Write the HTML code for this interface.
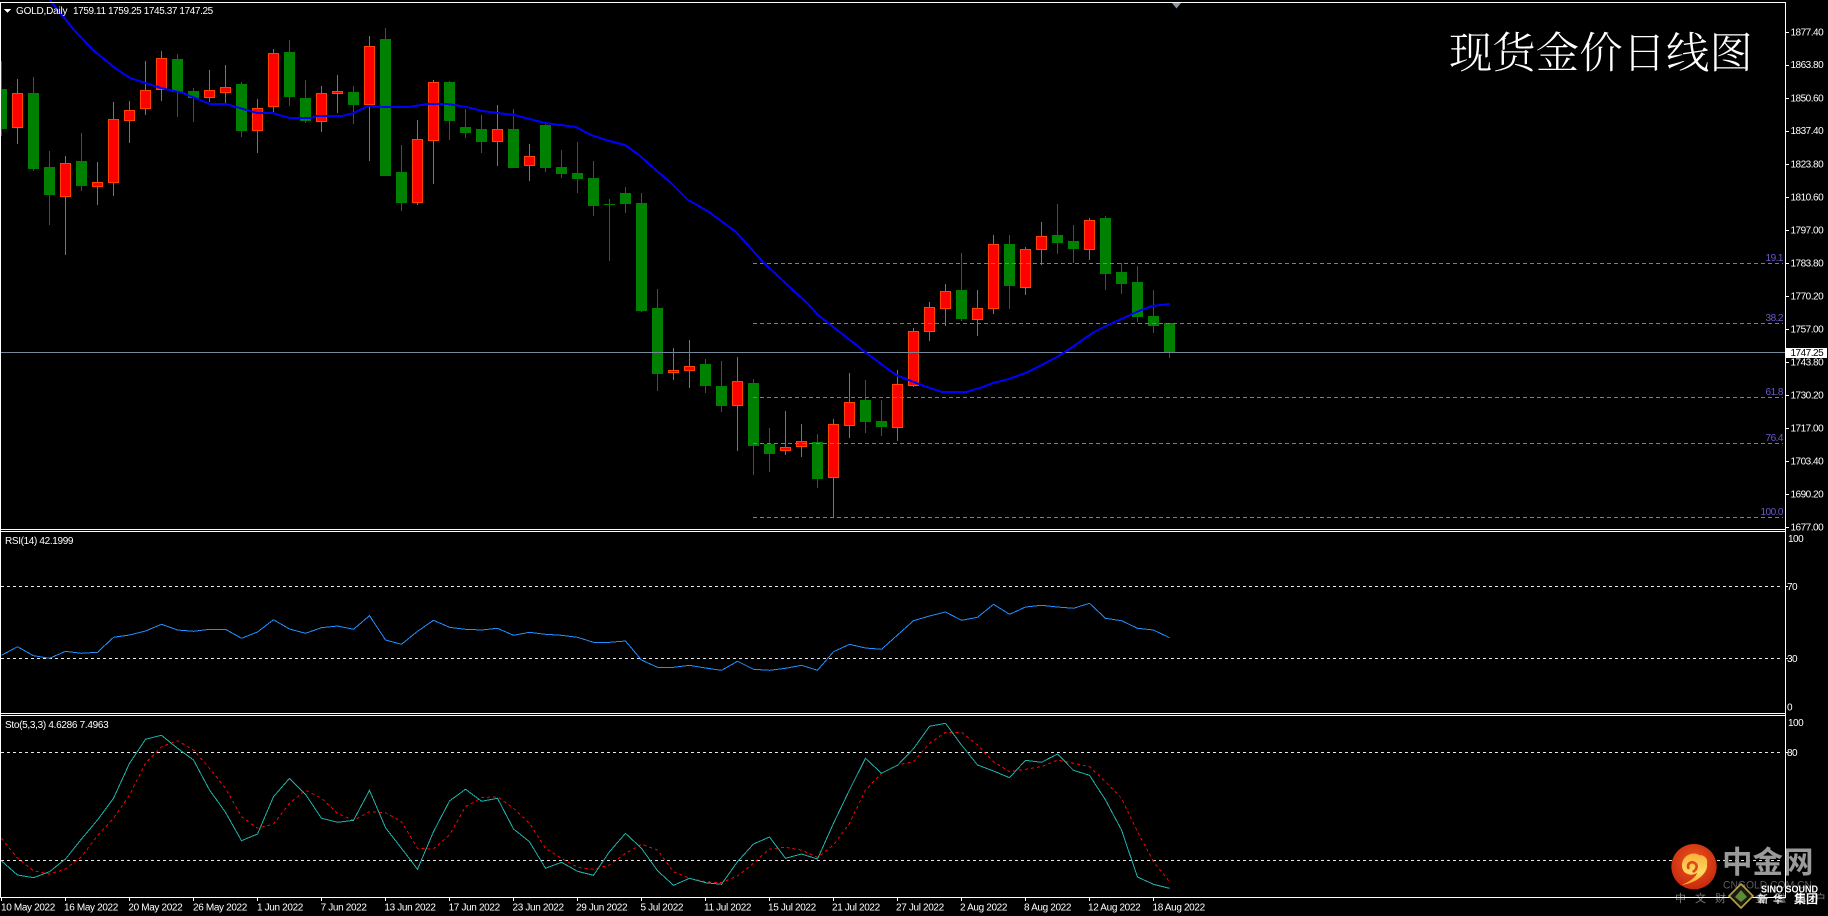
<!DOCTYPE html>
<html lang="zh">
<head>
<meta charset="utf-8">
<title>GOLD Daily</title>
<style>
html,body{margin:0;padding:0;background:#000;width:1828px;height:916px;overflow:hidden}
svg{display:block}
text{font-family:"Liberation Sans","Noto Sans CJK SC",sans-serif;font-size:10px;fill:#fff}
.a text,text.a{letter-spacing:-.5px}
.d text{letter-spacing:-.35px}
.f text{letter-spacing:-.5px;fill:#6a5acd;text-anchor:end}
</style>
</head>
<body>
<svg xmlns="http://www.w3.org/2000/svg" width="1828" height="916" viewBox="0 0 1828 916">
<defs>
<radialGradient id="lg" cx="50%" cy="40%" r="60%"><stop offset="0" stop-color="#ea5a1c"/><stop offset="1" stop-color="#c9280f"/></radialGradient>
<linearGradient id="ly" x1="0" y1="0" x2="0" y2="1"><stop offset="0" stop-color="#fbb03a"/><stop offset=".6" stop-color="#ffd860"/><stop offset="1" stop-color="#f5a623"/></linearGradient>
</defs>
<rect width="1828" height="916" fill="#000"/>

<g shape-rendering="crispEdges">
<!-- candles -->
<path fill="none" stroke="#008000" d="M1.5 61V136M33.5 77V171M49.5 151V225M81.5 133V191M177.5 54V117M193.5 88V122M241.5 82V137M289.5 40V106M305.5 80V123M353.5 86V124M385.5 28V176M401.5 145V211M449.5 81V140M465.5 109V138M481.5 115V153M513.5 109V168M545.5 124V172M561.5 150V178M577.5 142V193M593.5 161V216M609.5 199V261M625.5 187V213M641.5 193V312M657.5 289V391M705.5 359V393M721.5 361V412M753.5 379V475M769.5 428V472M817.5 434V488M865.5 380V433M881.5 400V436M961.5 253V321M1009.5 235V309M1057.5 204V254M1073.5 225V263M1105.5 216V290M1121.5 263V294M1137.5 266V322M1153.5 290V333M1169.5 323V358"/>
<path fill="#008000" d="M-4 89h11v40h-11zM28 93h11v76h-11zM44 167h11v28h-11zM76 161h11v25h-11zM172 59h11v33h-11zM188 91h11v7h-11zM236 84h11v47h-11zM284 52h11v45h-11zM300 98h11v23h-11zM348 92h11v13h-11zM380 39h11v137h-11zM396 172h11v31h-11zM444 82h11v39h-11zM460 127h11v6h-11zM476 129h11v13h-11zM508 129h11v39h-11zM540 125h11v43h-11zM556 167h11v7h-11zM572 173h11v6h-11zM588 178h11v28h-11zM604 204h11v1h-11zM620 193h11v11h-11zM636 203h11v108h-11zM652 308h11v66h-11zM700 364h11v22h-11zM716 386h11v20h-11zM748 383h11v63h-11zM764 444h11v10h-11zM812 442h11v37h-11zM860 400h11v22h-11zM876 421h11v6h-11zM956 290h11v29h-11zM1004 244h11v42h-11zM1052 235h11v8h-11zM1068 241h11v8h-11zM1100 218h11v56h-11zM1116 272h11v12h-11zM1132 282h11v35h-11zM1148 316h11v10h-11zM1164 323h11v30h-11z"/>
<path fill="none" stroke="#ff4500" d="M17.5 79V144M65.5 156V255M97.5 162V205M113.5 102V196M129.5 101V143M145.5 61V115M161.5 51V101M209.5 70V102M225.5 65V103M257.5 99V153M273.5 49V112M321.5 86V132M337.5 75V113M369.5 36V161M417.5 120V205M433.5 80V184M497.5 105V166M529.5 144V181M673.5 348V380M689.5 340V388M737.5 357V451M785.5 411V455M801.5 424V457M833.5 419V517M849.5 373V438M897.5 370V441M913.5 328V387M929.5 302V341M945.5 284V326M977.5 290V336M993.5 235V314M1025.5 247V295M1041.5 222V265M1089.5 218V260"/>
<path fill="#ff0000" stroke="#ff4500" d="M12.5 93.5h10v34h-10zM60.5 163.5h10v33h-10zM92.5 182.5h10v4h-10zM108.5 119.5h10v63h-10zM124.5 110.5h10v10h-10zM140.5 90.5h10v18h-10zM156.5 58.5h10v31h-10zM204.5 90.5h10v7h-10zM220.5 87.5h10v5h-10zM252.5 108.5h10v22h-10zM268.5 53.5h10v53h-10zM316.5 93.5h10v28h-10zM332.5 91.5h10v2h-10zM364.5 46.5h10v58h-10zM412.5 139.5h10v63h-10zM428.5 82.5h10v58h-10zM492.5 129.5h10v12h-10zM524.5 156.5h10v9h-10zM668.5 370.5h10v2h-10zM684.5 366.5h10v4h-10zM732.5 381.5h10v24h-10zM780.5 447.5h10v3h-10zM796.5 441.5h10v5h-10zM828.5 424.5h10v53h-10zM844.5 402.5h10v23h-10zM892.5 384.5h10v43h-10zM908.5 331.5h10v54h-10zM924.5 307.5h10v24h-10zM940.5 291.5h10v17h-10zM972.5 308.5h10v11h-10zM988.5 244.5h10v64h-10zM1020.5 249.5h10v38h-10zM1036.5 236.5h10v13h-10zM1084.5 220.5h10v29h-10z"/>

<!-- current price line -->
<path stroke="#778899" d="M0 352.5H1785"/>
<!-- fibonacci -->
<path stroke="#7b68ee" stroke-dasharray="4 3" fill="none" d="M753 263.5H1783M753 323.5H1783M753 397.5H1783M753 443.5H1783M753 517.5H1783"/>

<!-- MA -->
<polyline fill="none" stroke="#0000ff" stroke-width="2" points="50,0 74,30 93,50 115,68 130,78 161,88 183,93 210,104 226,104 257,113 272,113 290,118 311,118 317,116 342,116 354,113 368,106 385,107 408,107 428,104 447,104 467,107 482,111 514,115 545,123 576,127 591,135 606,140 625,145 639,155 658,172 670,182 688,200 709,212 736,232 763,262 782,280 808,304 818,315 841,333 865,352 896,375 911,381 927,387 942,392 966,392 983,387 993,383 1009,379 1028,372 1057,357 1071,348 1094,332 1106,326 1139,311 1152,306 1169.5,304"/>

<!-- level lines -->
<path stroke="#e8e8e8" stroke-dasharray="3 3" fill="none" d="M1 586.5H1782M1 658.5H1782M1 752.5H1782M1 860.5H1782"/>

<!-- RSI -->
<polyline fill="none" stroke="#1e90ff" points="1.5,655.3 17.5,646.7 33.5,655.7 49.5,658.3 65.5,651.3 81.5,653.3 97.5,652.3 113.5,637.3 129.5,635 145.5,631 161.5,624.3 177.5,630 193.5,631.3 209.5,629.3 225.5,629.3 241.5,638.3 257.5,632 273.5,619.7 289.5,629 305.5,633.3 321.5,627.7 337.5,626 353.5,629.3 369.5,615.7 385.5,640 401.5,644.3 417.5,631.3 433.5,620.3 449.5,627.3 465.5,629.3 481.5,630 497.5,628.3 513.5,635.3 529.5,632.3 545.5,634.3 561.5,635.3 577.5,637.3 593.5,642.3 609.5,642.3 625.5,641 641.5,660 657.5,667.3 673.5,667.3 689.5,665.3 705.5,668 721.5,670.3 737.5,661.3 753.5,669.3 769.5,670.3 785.5,668.3 801.5,665.3 817.5,670.3 833.5,651.7 849.5,644.3 865.5,648 881.5,649.3 897.5,635 913.5,620.7 929.5,616 945.5,612 961.5,620.3 977.5,617.3 993.5,604.3 1009.5,614.3 1025.5,607 1041.5,605.3 1057.5,607 1073.5,608.3 1089.5,603.3 1105.5,618.3 1121.5,620.7 1137.5,628.3 1153.5,630 1169.5,637.7"/>

<!-- Stochastic signal -->
<polyline fill="none" stroke="#ff0000" stroke-dasharray="3 3" points="1.5,838.3 17.5,858.3 33.5,870.7 49.5,874 65.5,869 81.5,856.7 97.5,835.7 113.5,818.3 129.5,795 145.5,763.3 161.5,746.7 177.5,740.7 193.5,750 209.5,768.3 225.5,788.3 241.5,816.7 257.5,828.3 273.5,824 289.5,803.3 305.5,790.3 321.5,798.3 337.5,813.3 353.5,820.3 369.5,811.7 385.5,812.7 401.5,821.7 417.5,848.3 433.5,849 449.5,835 465.5,806.7 481.5,797.7 497.5,796.7 513.5,808.3 529.5,823.3 545.5,848.3 561.5,858.3 577.5,867.3 593.5,869.3 609.5,865 625.5,853.3 641.5,844.3 657.5,850 673.5,871.7 689.5,878.3 705.5,881.7 721.5,882.7 737.5,876 753.5,863.3 769.5,849 785.5,847.3 801.5,850 817.5,857.3 833.5,845 849.5,823.3 865.5,790 881.5,773.3 897.5,765 913.5,761.7 929.5,743.3 945.5,732.3 961.5,732.3 977.5,745 993.5,761.7 1009.5,771.7 1025.5,769.3 1041.5,766.7 1057.5,760 1073.5,763.3 1089.5,766.7 1105.5,781.7 1121.5,798.3 1137.5,831.7 1153.5,861.7 1169.5,881.7"/>
<!-- Stochastic main -->
<polyline fill="none" stroke="#20b2aa" points="1.5,861 17.5,875 33.5,877.7 49.5,871.7 65.5,859 81.5,839 97.5,820 113.5,798.3 129.5,763.3 145.5,739.3 161.5,735.3 177.5,748.3 193.5,760 209.5,790 225.5,812.3 241.5,840.7 257.5,834 273.5,796.7 289.5,778.3 305.5,794.3 321.5,818.3 337.5,822.3 353.5,820.3 369.5,790.3 385.5,827.7 401.5,848.3 417.5,869.3 433.5,831.7 449.5,801 465.5,789.3 481.5,801.3 497.5,798.3 513.5,829 529.5,841.7 545.5,868.3 561.5,862.3 577.5,871.3 593.5,875.3 609.5,851.7 625.5,833.3 641.5,848.3 657.5,870.7 673.5,885.3 689.5,878.3 705.5,882.7 721.5,884.3 737.5,861.7 753.5,844 769.5,837 785.5,858.3 801.5,854 817.5,859 833.5,823.3 849.5,790 865.5,758.3 881.5,773.3 897.5,765.3 913.5,748.7 929.5,726.3 945.5,723.3 961.5,745 977.5,765 993.5,771 1009.5,777.7 1025.5,760.3 1041.5,762.3 1057.5,754 1073.5,770.3 1089.5,775.3 1105.5,800 1121.5,830 1137.5,877 1153.5,884.3 1169.5,888.3"/>
</g>

<!-- title -->
<text x="1449" y="68" style="font-family:'Noto Serif CJK SC','Liberation Serif',serif;font-size:43.4px;font-weight:300;fill:#fff">现货金价日线图</text>

<!-- fib labels -->
<g class="f">
<text x="1783" y="261">19.1</text>
<text x="1783" y="321">38.2</text>
<text x="1783" y="395">61.8</text>
<text x="1783" y="441">76.4</text>
<text x="1783" y="515">100.0</text>
</g>

<!-- logo -->
<g transform="translate(1665 840) scale(.33333)">
<circle cx="87" cy="80" r="68" fill="url(#lg)"/>
<path fill="url(#ly)" d="M50 135C75 125 92 112 97 98C85 108 62 106 54 90C46 72 54 52 72 44C84 38 96 40 104 46C118 44 130 58 126 72C130 96 100 128 50 135Z"/>
<path fill="none" stroke="#e0481a" stroke-width="8" stroke-linecap="round" d="M70 84C66 70 80 62 90 70C98 76 96 88 86 94"/>
</g>
<text x="1722" y="873" style="font-size:30.5px;font-weight:700;fill:#9a9a9a;font-family:'Noto Sans CJK SC',sans-serif">中金网</text>
<text x="1723" y="888.5" textLength="89" lengthAdjust="spacingAndGlyphs" style="font-size:11px;fill:#5c5c5c">CNGOLD.COM.CN</text>
<text x="1675" y="902" style="font-size:11px;letter-spacing:9px;fill:#7a7a7a;font-family:'Noto Sans CJK SC',sans-serif">中文财经金融门户</text>

<!-- frame lines -->
<g shape-rendering="crispEdges" fill="#fff">
<rect x="0" y="2" width="1785" height="1"/>
<rect x="0" y="529" width="1785" height="1"/>
<rect x="0" y="531" width="1785" height="1"/>
<rect x="0" y="713" width="1785" height="1"/>
<rect x="0" y="715" width="1785" height="1"/>
<rect x="0" y="897" width="1785" height="1"/>
<rect x="0" y="2" width="1" height="896"/>
<rect x="1785" y="2" width="1" height="896"/>
<path stroke="#fff" d="M1785 32.5h4M1785 65.5h4M1785 98.5h4M1785 131.5h4M1785 164.5h4M1785 197.5h4M1785 230.5h4M1785 263.5h4M1785 296.5h4M1785 329.5h4M1785 362.5h4M1785 395.5h4M1785 428.5h4M1785 461.5h4M1785 494.5h4M1785 527.5h4M1785 586.5h3M1785 658.5h3M1785 752.5h3M1.5 898v3M65.5 898v3M129.5 898v3M193.5 898v3M257.5 898v3M321.5 898v3M385.5 898v3M449.5 898v3M513.5 898v3M577.5 898v3M641.5 898v3M705.5 898v3M769.5 898v3M833.5 898v3M897.5 898v3M961.5 898v3M1025.5 898v3M1089.5 898v3M1153.5 898v3"/>
</g>

<!-- logo overlays on top of the frame -->
<g transform="translate(1741 896)">
<path d="M0-12L12 0L0 12L-12 0Z" fill="#1c1a10" stroke="#b9a24a" stroke-width="1.6"/>
<path d="M0-6L6 1L0 6L-6 1Z" fill="#5f8a3a"/>
</g>
<text x="1761" y="892.5" textLength="57" lengthAdjust="spacingAndGlyphs" style="font-size:10px;font-weight:700;fill:#fff">SINO SOUND</text>
<text x="1758" y="903" style="font-size:10px;font-weight:700;letter-spacing:5px;fill:#e8e8e8;font-family:'Noto Sans CJK SC',sans-serif">新华</text>
<text x="1794" y="903" style="font-size:12px;font-weight:700;fill:#fff;font-family:'Noto Sans CJK SC',sans-serif">集团</text>

<!-- top markers -->
<path d="M4 9H11L7.5 13Z" fill="#fff" shape-rendering="crispEdges"/>
<path d="M1172 3H1181L1176.5 8.5Z" fill="#8a97a6"/>

<!-- chart labels -->
<text x="16" y="14" style="letter-spacing:-.2px">GOLD,Daily</text>
<text x="73" y="14" style="letter-spacing:-.4px">1759.11 1759.25 1745.37 1747.25</text>
<text x="5" y="544" style="letter-spacing:-.35px">RSI(14) 42.1999</text>
<text x="5" y="728" style="letter-spacing:-.3px">Sto(5,3,3) 4.6286 7.4963</text>

<!-- price axis -->
<g class="a">
<text x="1790.5" y="35.5">1877.40</text>
<text x="1790.5" y="68">1863.80</text>
<text x="1790.5" y="101.5">1850.60</text>
<text x="1790.5" y="134">1837.40</text>
<text x="1790.5" y="167.5">1823.80</text>
<text x="1790.5" y="200.5">1810.60</text>
<text x="1790.5" y="233.5">1797.00</text>
<text x="1790.5" y="266.5">1783.80</text>
<text x="1790.5" y="299.5">1770.20</text>
<text x="1790.5" y="332.5">1757.00</text>
<text x="1790.5" y="365.5">1743.80</text>
<text x="1790.5" y="398.5">1730.20</text>
<text x="1790.5" y="431.5">1717.00</text>
<text x="1790.5" y="464.5">1703.40</text>
<text x="1790.5" y="497.5">1690.20</text>
<text x="1790.5" y="530.5">1677.00</text>
<text x="1788" y="542">100</text>
<text x="1787" y="590">70</text>
<text x="1787" y="662">30</text>
<text x="1787" y="710.5">0</text>
<text x="1788" y="726">100</text>
<text x="1787" y="756">80</text>
</g>
<rect x="1786" y="348" width="41" height="10" fill="#fff" shape-rendering="crispEdges"/>
<text x="1790.5" y="356" style="letter-spacing:-.5px;fill:#000">1747.25</text>

<!-- time axis -->
<g class="d">
<text x="1" y="910.5">10 May 2022</text>
<text x="64" y="910.5">16 May 2022</text>
<text x="128.4" y="910.5">20 May 2022</text>
<text x="193" y="910.5">26 May 2022</text>
<text x="257" y="910.5">1 Jun 2022</text>
<text x="320.6" y="910.5">7 Jun 2022</text>
<text x="384.4" y="910.5">13 Jun 2022</text>
<text x="448.6" y="910.5">17 Jun 2022</text>
<text x="512.5" y="910.5">23 Jun 2022</text>
<text x="576" y="910.5">29 Jun 2022</text>
<text x="640.5" y="910.5">5 Jul 2022</text>
<text x="704" y="910.5">11 Jul 2022</text>
<text x="768" y="910.5">15 Jul 2022</text>
<text x="832" y="910.5">21 Jul 2022</text>
<text x="896" y="910.5">27 Jul 2022</text>
<text x="960" y="910.5">2 Aug 2022</text>
<text x="1024" y="910.5">8 Aug 2022</text>
<text x="1088" y="910.5">12 Aug 2022</text>
<text x="1152.5" y="910.5">18 Aug 2022</text>
</g>
</svg>
</body>
</html>
